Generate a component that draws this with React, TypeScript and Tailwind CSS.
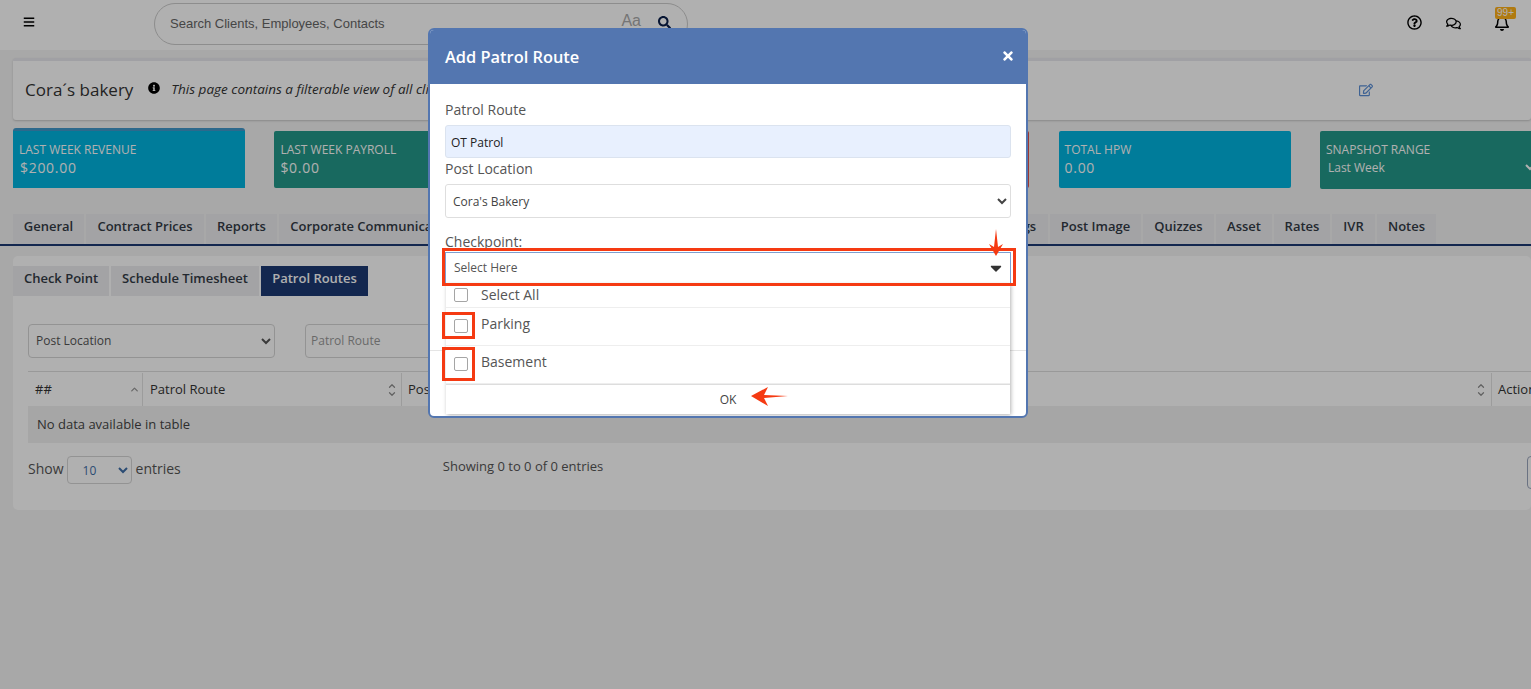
import { FaBars, FaCaretDown, FaInfoCircle, FaRegBell, FaRegComments, FaRegEdit, FaRegQuestionCircle, FaSearch, FaTimes } from "react-icons/fa";
import { ChevronUp, ChevronDown } from "lucide-react";

const mainTabs = [
  { label: "General", w: "w-[71px]" },
  { label: "Contract Prices", w: "w-[118px]" },
  { label: "Reports", w: "w-[71px]" },
  { label: "Corporate Communications", w: "w-[196px]" },
  { label: "Sites", w: "w-[75px]" },
  { label: "Employees", w: "w-[100px]" },
  { label: "Documents", w: "w-[110px]" },
  { label: "Invoices", w: "w-[95px]" },
  { label: "Payments", w: "w-[107px]" },
  { label: "Settings", w: "w-[74px]" },
  { label: "Post Image", w: "w-[91px]" },
  { label: "Quizzes", w: "w-[71px]" },
  { label: "Asset", w: "w-[56px]" },
  { label: "Rates", w: "w-[56px]" },
  { label: "IVR", w: "w-[43px]" },
  { label: "Notes", w: "w-[59px]" },
];

function Stat({ label, value, color }: { label: string; value: string; color: string }) {
  return (
    <div className={`${color} mt-[3px] h-[57px] w-[232px] shrink-0 rounded-[2px] px-[6px] pt-[11px] text-white`}>
      <div className="text-[12px] leading-[16px]">{label}</div>
      <div className="mt-px text-[14px] leading-[18px] tracking-[0.7px]">{value}</div>
    </div>
  );
}

function SortArrows() {
  return (
    <span className="flex flex-col text-[#8f8f8f]">
      <ChevronUp size={10} strokeWidth={3} className="-mb-[2px]" />
      <ChevronDown size={10} strokeWidth={3} />
    </span>
  );
}

function CheckRow({ label, className, textClass }: { label: string; className: string; textClass: string }) {
  return (
    <div className={`flex border-b border-[#eeeeee] pl-[8px] ${className}`}>
      <span className="h-[14px] w-[14px] shrink-0 rounded-[2px] border border-[#a5a5a5] bg-white" />
      <span className={`ml-[13px] text-[14px] leading-[14px] text-[#555555] ${textClass}`}>{label}</span>
    </div>
  );
}

export default function App() {
  return (
    <div className="relative h-[689px] w-[1531px] overflow-hidden bg-[#f3f3f3] font-['Open_Sans',sans-serif] text-[#333333]">
      {/* top bar */}
      <header className="flex h-[50px] items-start bg-white">
        <FaBars size={12} className="ml-[23px] mt-[16px] text-black" />
        <div className="ml-[119px] mt-[3px] flex h-[42px] w-[534px] items-center rounded-full border border-[#cccccc] pl-[15px] pr-[16px] font-['Liberation_Sans',sans-serif] text-[13px] text-[#666666]">
          <span>Search Clients, Employees, Contacts</span>
          <span className="ml-auto -mt-[6px] text-[16px] text-[#aaaaaa]">Aa</span>
          <FaSearch size={13} className="ml-[17px] -mt-[4px] text-[#0b1f4b]" />
        </div>
        <FaRegQuestionCircle size={15} className="ml-[719px] mt-[15px] text-black" />
        <FaRegComments size={15} className="ml-[24px] mt-[16px] text-black" />
        <div className="relative ml-[33px] mt-[15px]">
          <FaRegBell size={16} className="text-black" />
          <span className="absolute -top-[8px] left-[1px] h-[12px] w-[21px] rounded-[2px] bg-[#ffb118] text-center font-['Liberation_Sans',sans-serif] text-[10px] leading-[12px] text-white">99+</span>
        </div>
      </header>

      {/* title */}
      <section className="ml-[13px] mt-[8px] flex h-[62px] items-center rounded-[3px] border-t-[3px] border-[#e8e8ee] bg-white pb-[2px] shadow-[0_1px_2px_rgba(0,0,0,0.18)]">
        <h1 className="ml-[12px] text-[17px] text-[#333333]">Cora´s bakery</h1>
        <FaInfoCircle size={12} className="ml-[15px] -mt-[3px] text-black" />
        <p className="ml-[11px] text-[13.5px] italic">This page contains a filterable view of all clients and their related information.</p>
        <FaRegEdit size={14} className="ml-auto mr-[158px] text-[#5b8fd6]" />
      </section>

      {/* stats */}
      <section className="mt-[8px] flex h-[60px] items-start gap-[29.4px] pl-[13px]">
        <div className="h-[60px] w-[232px] shrink-0 rounded-t-[3px] border-t-[3px] border-[#4299cb] bg-[#00b4e0] px-[6px] pt-[11px] text-white">
          <div className="text-[12px] leading-[16px]">LAST WEEK REVENUE</div>
          <div className="ml-px mt-px text-[14px] leading-[18px] tracking-[0.7px]">$200.00</div>
        </div>
        <Stat label="LAST WEEK PAYROLL" value="$0.00" color="bg-[#24998a]" />
        <Stat label="LAST WEEK PROFIT" value="$200.00" color="bg-[#00b4e0]" />
        <Stat label="TOTAL HOURS" value="0.00" color="bg-[#e2504c]" />
        <Stat label="TOTAL HPW" value="0.00" color="bg-[#00b4e0]" />
        <div className="mt-[3px] h-[58px] w-[232px] shrink-0 rounded-[2px] bg-[#24998a] px-[6px] pt-[11px] text-white">
          <div className="text-[12px] leading-[16px]">SNAPSHOT RANGE</div>
          <select defaultValue="Last Week" className="-ml-[2px] block w-[214px] bg-transparent text-[12px] leading-[18px] text-white">
            <option className="text-black">Last Week</option>
          </select>
        </div>
      </section>

      {/* main tabs */}
      <nav className="mt-[26px] flex gap-[2px] border-b-2 border-[#1c3973] pl-[13px]">
        {mainTabs.map((tab) => (
          <div key={tab.label} className={`${tab.w} h-[30px] shrink-0 overflow-hidden whitespace-nowrap bg-[#ecedf0] text-center text-[13px] font-semibold leading-[25px] text-[#333a45]`}>
            {tab.label}
          </div>
        ))}
      </nav>

      {/* panel */}
      <section className="ml-[13px] mt-[10px] h-[254px] overflow-hidden rounded-[5px] bg-white pt-[10px]">
        <div className="flex gap-[2px]">
          <div className="h-[30px] w-[96px] bg-[#ecedf0] text-center text-[13px] font-semibold leading-[25px] text-[#333a45]">Check Point</div>
          <div className="h-[30px] w-[148px] bg-[#ecedf0] text-center text-[13px] font-semibold leading-[25px] text-[#333a45]">Schedule Timesheet</div>
          <div className="h-[30px] w-[107px] bg-[#1c3973] text-center text-[13px] font-semibold leading-[25px] text-white">Patrol Routes</div>
        </div>

        <div className="ml-[15px] mt-[28px] flex gap-[30px]">
          <select defaultValue="Post Location" className="h-[34px] w-[247px] rounded-[4px] border border-[#d5d5d5] bg-white pb-[2px] pl-[3px] text-[12px] text-[#555555]">
            <option>Post Location</option>
          </select>
          <div className="h-[34px] w-[200px] rounded-[4px] border border-[#d5d5d5] pl-[5px] text-[12px] leading-[32px] text-[#999999]">Patrol Route</div>
        </div>

        {/* table */}
        <div className="ml-[15px] mt-[13px] w-[1510px] text-[13px]">
          <div className="flex h-[35px] items-center border-t border-[#dedede] pt-px">
            <div className="flex h-full w-[115px] items-center justify-between border-r border-[#e3e3e3] pl-[7px] pr-[2px]">
              <span>##</span>
              <ChevronUp size={11} strokeWidth={3} className="text-[#9a9a9a]" />
            </div>
            <div className="flex h-full w-[259px] items-center justify-between border-r border-[#e3e3e3] pl-[7px] pr-[4px]">
              <span>Patrol Route</span>
              <SortArrows />
            </div>
            <div className="flex h-full w-[1090px] items-center justify-between border-r border-[#e3e3e3] pl-[6px] pr-[5px]">
              <span>Post Location</span>
              <SortArrows />
            </div>
            <div className="pl-[6px]">Action</div>
          </div>
          <div className="h-[37px] bg-[#f1f1f1] pl-[9px] leading-[36px] text-[#444444]">No data available in table</div>
        </div>

        <div className="ml-[15px] mt-[13px] flex items-start text-[14px] text-[#555555]">
          <span className="shrink-0 leading-[26px]">Show</span>
          <select defaultValue="10" className="ml-[3px] h-[28px] w-[65px] shrink-0 rounded-[4px] border border-[#d5d5d5] bg-white pl-[11px] text-[12px] text-[#3f6fa8]">
            <option>10</option>
          </select>
          <span className="ml-[4px] shrink-0 leading-[26px]">entries</span>
          <span className="ml-[262px] shrink-0 whitespace-nowrap text-[13px] leading-[21px]">Showing 0 to 0 of 0 entries</span>
          <div className="ml-[924px] h-[33px] w-[40px] shrink-0 rounded-[4px] border border-[#9aa5bd]" />
        </div>
      </section>

      {/* dim layer */}
      <div className="absolute inset-0 bg-black/[0.31]" />

      {/* modal */}
      <div className="absolute left-[428px] top-[28px] h-[390px] w-[600px] overflow-hidden rounded-[6px] border-2 border-[#5376b0] bg-white">
        <div className="flex h-[54px] items-center justify-between bg-[#5376b0] pl-[15px] pr-[11px] text-white">
          <h2 className="text-[16.4px] font-semibold">Add Patrol Route</h2>
          <FaTimes size={14} className="-mt-[2px] text-white" />
        </div>
        <div className="absolute left-0 right-0 top-[320px] h-px bg-[#e5e5e5]" />
        <div className="relative px-[15px] pt-[16px] text-[14px] text-[#555555]">
          <label className="block leading-[20px]">Patrol Route</label>
          <div className="mt-[5px] h-[33px] w-[566px] rounded-[3px] border border-[#dbe3ef] bg-[#e8f0fe] pl-[5px] text-[12px] leading-[33px] text-[#222222]">OT Patrol</div>
          <label className="mt-px block leading-[20px]">Post Location</label>
          <select defaultValue="Cora's Bakery" className="mt-[5px] h-[34px] w-[566px] rounded-[3px] border border-[#dedede] bg-white pl-[3px] text-[12px] text-[#444444]">
            <option>Cora's Bakery</option>
          </select>
          <label className="mt-[14px] block leading-[20px]">Checkpoint:</label>
          <div className="flex h-[32px] w-[566px] items-center justify-between border border-[#7e9fd0] pl-[8px] pr-[5px] text-[12px] text-[#555555]">
            <span className="-mt-px">Select Here</span>
            <FaCaretDown size={18} className="text-[#333333]" />
          </div>
          <div className="ml-px h-[130px] w-[564px] bg-white shadow-[1px_1px_4px_rgba(0,0,0,0.3)]">
            <CheckRow label="Select All" className="h-[24px] pt-[4px]" textClass="" />
            <CheckRow label="Parking" className="h-[38px] pt-[11px]" textClass="-mt-[2px]" />
            <CheckRow label="Basement" className="h-[38px] pt-[11px]" textClass="-mt-[2px]" />
            <div className="h-[30px] border-t border-[#dddddd] text-center text-[12px] leading-[30px] text-[#444444]">OK</div>
          </div>
        </div>
      </div>

      {/* red annotations */}
      <div className="absolute left-[442px] top-[248px] h-[38px] w-[574px] border-[3px] border-[#f53a12]" />
      <div className="absolute left-[442px] top-[312px] h-[27px] w-[33px] border-[3px] border-[#f53a12]" />
      <div className="absolute left-[442px] top-[347px] h-[34px] w-[33px] border-[3px] border-[#f53a12]" />
      <svg className="absolute left-[988px] top-[228px]" width="16" height="32" viewBox="0 0 16 32">
        <path d="M8 1 L10 19 L15 16 L8 28 L1 16 L6 19 Z" fill="#f53a12" />
      </svg>
      <svg className="absolute left-[750px] top-[386px]" width="40" height="22" viewBox="0 0 40 22">
        <path d="M1 10 L18 1 L14 9 L38 10 L14 12 L18 20 Z" fill="#f53a12" />
      </svg>
    </div>
  );
}
